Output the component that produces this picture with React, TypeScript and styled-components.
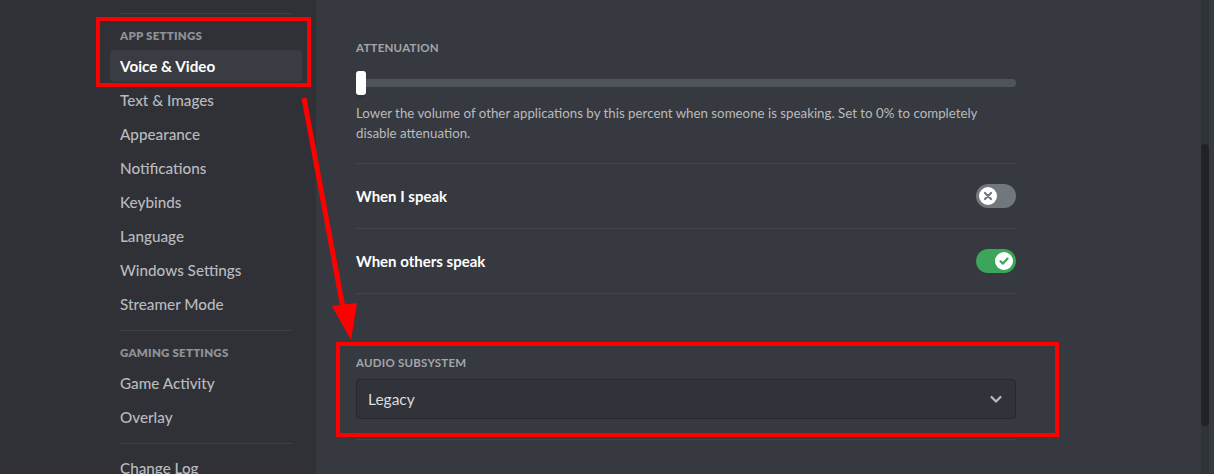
import React from 'react'
import styled, { createGlobalStyle } from 'styled-components'

const GlobalStyle = createGlobalStyle`
  html, body {
    margin: 0;
    padding: 0;
    width: 1214px;
    height: 474px;
    overflow: hidden;
    background: #36393f;
  }

  body {
    font-family: Lato, 'Noto Sans', 'Liberation Sans', sans-serif;
    -webkit-font-smoothing: antialiased;
  }
`

const Page = styled.div`
  position: relative;
  display: flex;
  width: 1214px;
  height: 474px;
  overflow: hidden;
`

const Sidebar = styled.nav`
  width: 316px;
  flex-shrink: 0;
  background: #2f3136;
  display: flex;
  justify-content: flex-end;
`

const SideList = styled.div`
  width: 192px;
  padding: 5px 14px 0 0;
  display: flex;
  flex-direction: column;
`

const Separator = styled.div`
  height: 1px;
  flex-shrink: 0;
  margin: 8px 10px;
  background: #3f4147;
`

const SideHeader = styled.div`
  padding: 6px 10px;
  font-size: 11.5px;
  line-height: 16px;
  font-weight: 800;
  letter-spacing: 0.02em;
  text-transform: uppercase;
  color: #8e9297;
`

const SideItem = styled.div<{ $selected?: boolean }>`
  flex-shrink: 0;
  padding: 6px 10px;
  margin-bottom: 2px;
  border-radius: 4px;
  font-size: 15.25px;
  line-height: 20px;
  font-weight: ${(p) => (p.$selected ? 700 : 500)};
  color: ${(p) => (p.$selected ? '#ffffff' : '#b9bbbe')};
  background: ${(p) => (p.$selected ? '#393c43' : 'transparent')};
`

const Main = styled.main`
  flex: 1;
  display: flex;
  background: #36393f;
`

const Column = styled.div`
  width: 660px;
  padding: 40px 0 0 40px;
  display: flex;
  flex-direction: column;
`

const FormTitle = styled.h5`
  margin: 0 0 8px;
  font-size: 11.5px;
  line-height: 16px;
  font-weight: 700;
  letter-spacing: 0.02em;
  text-transform: uppercase;
  color: #a3a6aa;
`

const SliderWrap = styled.div`
  position: relative;
  height: 40px;
  margin-top: -1px;
  display: flex;
  align-items: center;
`

const Track = styled.div`
  flex: 1;
  height: 8px;
  border-radius: 4px;
  background: #4f545c;
`

const Grabber = styled.div`
  position: absolute;
  left: 0;
  top: 8px;
  width: 10px;
  height: 24px;
  border-radius: 3px;
  background: #ffffff;
  box-shadow: 0 3px 1px rgba(0, 0, 0, 0.08);
`

const Description = styled.p`
  margin: 0 0 20px;
  font-size: 13.3px;
  line-height: 20px;
  color: #b9bbbe;
`

const Divider = styled.div<{ $gap?: number }>`
  height: 1px;
  flex-shrink: 0;
  background: #42454b;
  margin-bottom: ${(p) => p.$gap ?? 0}px;
`

const Row = styled.div`
  height: 64px;
  display: flex;
  align-items: center;
  justify-content: space-between;
`

const RowLabel = styled.span`
  font-size: 15px;
  line-height: 20px;
  font-weight: 700;
  color: #ffffff;
`

const Switch = styled.div<{ $on?: boolean }>`
  width: 40px;
  height: 24px;
  border-radius: 12px;
  padding: 3px;
  box-sizing: border-box;
  display: flex;
  justify-content: ${(p) => (p.$on ? 'flex-end' : 'flex-start')};
  background: ${(p) => (p.$on ? '#3ba55c' : '#72767d')};
`

const Knob = styled.div`
  width: 18px;
  height: 18px;
  border-radius: 50%;
  background: #ffffff;
  display: flex;
  align-items: center;
  justify-content: center;
`

const SelectBox = styled.div`
  height: 40px;
  box-sizing: border-box;
  margin-bottom: 20px;
  padding: 0 12px 0 11px;
  border: 1px solid #26282c;
  border-radius: 4px;
  background: #303339;
  display: flex;
  align-items: center;
  justify-content: space-between;
  font-size: 15.5px;
  color: #dcddde;
`

const Scrollbar = styled.div`
  width: 8px;
  margin-left: auto;
  margin-right: 5px;
  background: #2e3338;
  position: relative;
`

const Thumb = styled.div`
  position: absolute;
  left: 0;
  top: 144px;
  width: 8px;
  height: 282px;
  border-radius: 4px;
  background: #202225;
`

const Marker = styled.div<{ $x: number; $y: number; $w: number; $h: number }>`
  position: absolute;
  left: ${(p) => p.$x}px;
  top: ${(p) => p.$y}px;
  width: ${(p) => p.$w}px;
  height: ${(p) => p.$h}px;
  box-sizing: border-box;
  border: 4px solid #ff0000;
  pointer-events: none;
`

const ArrowLayer = styled.svg`
  position: absolute;
  left: 0;
  top: 0;
  pointer-events: none;
`

const appItems = ['Text & Images', 'Appearance', 'Notifications', 'Keybinds', 'Language', 'Windows Settings', 'Streamer Mode']
const gamingItems = ['Game Activity', 'Overlay']

function Toggle({ on }: { on?: boolean }) {
  return (
    <Switch $on={on}>
      <Knob>
        {on ? (
          <svg width="12" height="12" viewBox="0 0 12 12">
            <path d="M2.5 6.2 L5 8.6 L9.6 3.6" fill="none" stroke="#3ba55c" strokeWidth="2.2" strokeLinecap="round" strokeLinejoin="round" />
          </svg>
        ) : (
          <svg width="10" height="10" viewBox="0 0 10 10">
            <path d="M2 2 L8 8 M8 2 L2 8" stroke="#72767d" strokeWidth="2.2" strokeLinecap="round" />
          </svg>
        )}
      </Knob>
    </Switch>
  )
}

export default function App() {
  return (
    <>
      <GlobalStyle />
      <Page>
        <Sidebar>
          <SideList>
            <Separator />
            <SideHeader>App Settings</SideHeader>
            <SideItem $selected>Voice &amp; Video</SideItem>
            {appItems.map((item) => (
              <SideItem key={item}>{item}</SideItem>
            ))}
            <Separator />
            <SideHeader>Gaming Settings</SideHeader>
            {gamingItems.map((item) => (
              <SideItem key={item}>{item}</SideItem>
            ))}
            <Separator />
            <SideItem>Change Log</SideItem>
          </SideList>
        </Sidebar>
        <Main>
          <Column>
            <FormTitle>Attenuation</FormTitle>
            <SliderWrap>
              <Track />
              <Grabber />
            </SliderWrap>
            <Description>
              Lower the volume of other applications by this percent when someone is speaking. Set to 0% to completely
              disable attenuation.
            </Description>
            <Divider />
            <Row>
              <RowLabel>When I speak</RowLabel>
              <Toggle />
            </Row>
            <Divider />
            <Row>
              <RowLabel>When others speak</RowLabel>
              <Toggle on />
            </Row>
            <Divider $gap={61} />
            <FormTitle>Audio Subsystem</FormTitle>
            <SelectBox>
              <span>Legacy</span>
              <svg width="14" height="14" viewBox="0 0 14 14">
                <path d="M2.5 5 L7 9.5 L11.5 5" fill="none" stroke="#b9bbbe" strokeWidth="2.2" strokeLinecap="round" strokeLinejoin="round" />
              </svg>
            </SelectBox>
            <Divider />
          </Column>
          <Scrollbar>
            <Thumb />
          </Scrollbar>
        </Main>

        <Marker $x={96} $y={17} $w={215} $h={70} />
        <Marker $x={336} $y={342} $w={723} $h={95} />
        <ArrowLayer width="1214" height="474" viewBox="0 0 1214 474">
          <line x1="304" y1="98" x2="343" y2="308" stroke="#ff0000" strokeWidth="5" />
          <polygon points="332,306 357,303 351,340" fill="#ff0000" />
        </ArrowLayer>
      </Page>
    </>
  )
}
